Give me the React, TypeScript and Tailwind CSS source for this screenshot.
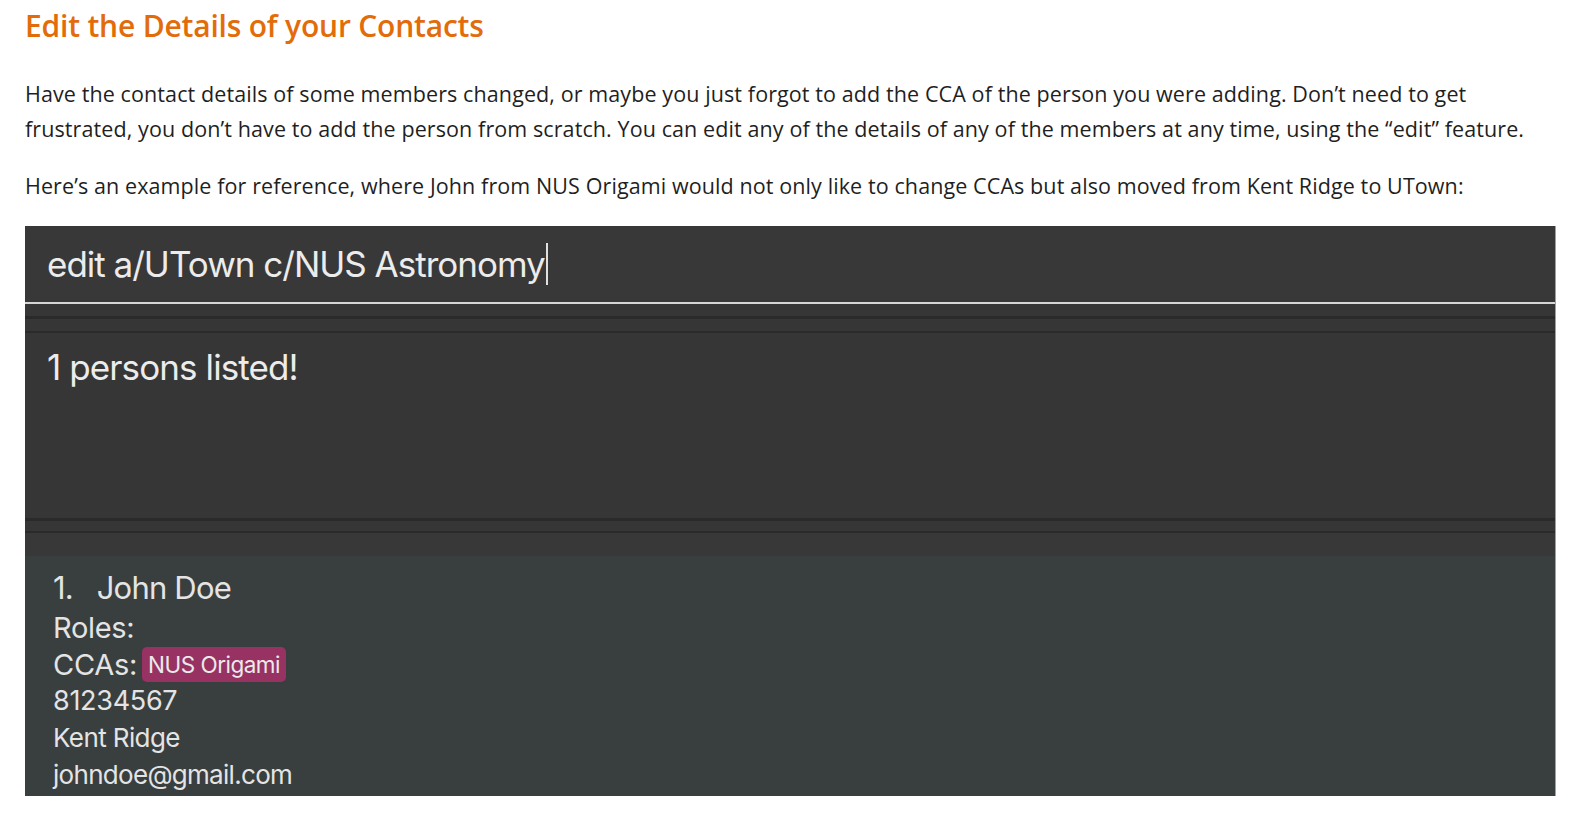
const ui = { fontFamily: '"Open Sans", "Noto Sans", sans-serif' };
const mac = { fontFamily: 'Inter, Roboto, sans-serif' };

export default function App() {
  return (
    <div className="min-h-[822px] w-full bg-white px-[25px]" style={ui}>
      {/* Heading */}
      <h2 className="pt-[7px] text-[30px] font-semibold leading-[38px] tracking-[-0.2px] text-[#e36c0a]">
        Edit the Details of your Contacts
      </h2>

      <p className="mt-[31px] whitespace-nowrap text-[21.5px] leading-[35px] tracking-[0.1px] text-[#1f1f1f]">
        Have the contact details of some members changed, or maybe you just forgot to add the CCA of the person you were adding. Don’t need to get
        <br />
        frustrated, you don’t have to add the person from scratch. You can edit any of the details of any of the members at any time, using the “edit” feature.
      </p>
      <p className="mt-[22px] whitespace-nowrap text-[21.5px] leading-[35px] tracking-[0.1px] text-[#1f1f1f]">
        Here’s an example for reference, where John from NUS Origami would not only like to change CCAs but also moved from Kent Ridge to UTown:
      </p>

      {/* App screenshot */}
      <div className="mt-[23px] w-[1531px] border-r border-[#a0a0a0]" style={mac}>
        {/* command box */}
        <div className="flex h-[76px] items-center bg-[#383838] px-[22px]">
          <span className="text-[35px] tracking-[-1px] text-[#ececec]">edit a/UTown c/NUS Astronomy</span>
          <span className="ml-[1px] h-[42px] w-[2px] bg-[#e0e0e0]" />
        </div>
        <div className="h-[2px] bg-[#d6d6d6]" />
        <div className="h-[12px] bg-[#363636]" />
        <div className="h-[3px] bg-[#2a2a2a]" />
        <div className="h-[12px] bg-[#363636]" />
        <div className="h-[2px] bg-[#2a2a2a]" />

        {/* result box */}
        <div className="h-[185px] bg-[#363636] px-[22px] pt-[8px]">
          <span className="text-[35px] tracking-[-0.9px] text-[#ececec]">1 persons listed!</span>
        </div>
        <div className="h-[3px] bg-[#2a2a2a]" />
        <div className="h-[10px] bg-[#363636]" />
        <div className="h-[2px] bg-[#2a2a2a]" />
        <div className="h-[23px] bg-[#383838]" />

        {/* person list */}
        <div className="h-[240px] bg-[#393e3e] px-[28px] pt-[12px] text-[#e4e4e4]">
          <div className="text-[31px] leading-[40px] tracking-[-0.8px]">1.&nbsp;&nbsp;&nbsp;John Doe</div>
          <div className="text-[29px] leading-[39px] tracking-[-0.3px]">Roles:</div>
          <div className="flex items-center text-[29px] leading-[35px] tracking-[-0.3px]">
            <span>CCAs:</span>
            <span className="ml-[5px] rounded-[5px] bg-[#983263] px-[6px] text-[22.5px] leading-[35px] tracking-[-0.5px] text-[#eaeaea]">
              NUS Origami
            </span>
          </div>
          <div className="text-[27px] leading-[37px] tracking-[-0.3px]">81234567</div>
          <div className="text-[26px] leading-[37px] tracking-[-0.6px]">Kent Ridge</div>
          <div className="text-[26px] leading-[37px] tracking-[-0.7px]">johndoe@gmail.com</div>
        </div>
      </div>
    </div>
  );
}
